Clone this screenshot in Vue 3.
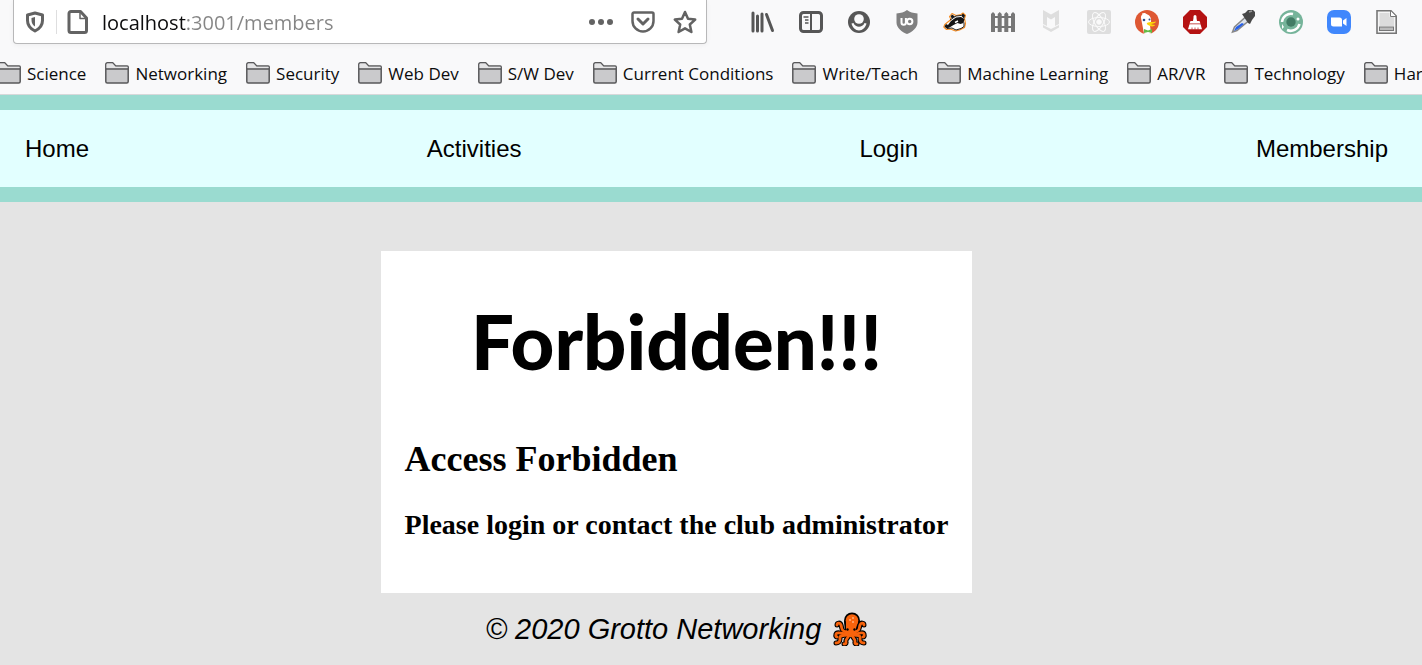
<script setup>
import { ref } from 'vue'

const address = ref('localhost:3001/members')
const bookmarks = [
  'Science', 'Networking', 'Security', 'Web Dev', 'S/W Dev', 'Current Conditions',
  'Write/Teach', 'Machine Learning', 'AR/VR', 'Technology', 'Hard',
]
const links = ['Home', 'Activities', 'Login', 'Membership']
const arms = [
  'M13 20C8 19 9 16 8 13 7 10 4 11 4 13',
  'M22 20c5-1 4-4 5-7 1-3 4-2 4 0',
  'M14 22c-6 0-10-3-11 0-.5 2 0 3 1 3',
  'M21 22c6 0 9-3 10 0 .5 2 0 3-1 3',
  'M15 23c-6 0-9 1-8 4 0 3-2 4-4 4',
  'M20 23c6 0 8 1 7 4 0 3 2 4 4 4',
  'M16 23c-1 4-4 4-3 7 .5 2-1 2-2 2',
  'M19 23c1 4 4 4 3 7-.5 2 1 2 2 2',
]
</script>

<template>
  <div class="window">
    <header class="chrome">
      <div class="toolbar">
        <div class="urlbar">
          <button class="tool shield" aria-label="Tracking protection">
            <svg viewBox="0 0 24 24" fill="none" stroke="#636363">
              <path d="M12 3 4.500 5v5.500C4.500 15.500 8 19 12 21c4-2 7.500-5.500 7.500-10.500V5Z" stroke-width="3" stroke-linejoin="round" />
              <path d="M12 7v9.500C9.500 15 8.500 13 8.500 10V8Z" fill="#636363" stroke="none" />
            </svg>
          </button>
          <button class="tool" aria-label="Site information">
            <svg viewBox="0 0 24 24" fill="none" stroke="#636363" stroke-width="3" stroke-linejoin="round">
              <path d="M5 1.500h9.500l6 6.500v12.500a2 2 0 0 1-2 2H5a2 2 0 0 1-2-2V3.500a2 2 0 0 1 2-2Z" />
              <path d="M14 2v6.500h6" stroke-width="1.500" />
            </svg>
          </button>
          <input v-model="address" class="address" type="text" aria-label="Address" spellcheck="false" />
          <div class="actions">
            <button class="tool" aria-label="Page actions">
              <svg viewBox="0 0 24 24" fill="#636363"><circle cx="3" cy="12" r="3" /><circle cx="12" cy="12" r="3" /><circle cx="21" cy="12" r="3" /></svg>
            </button>
            <button class="tool" aria-label="Save to Pocket">
              <svg viewBox="0 0 24 24" fill="none" stroke="#636363" stroke-width="2.500" stroke-linecap="round" stroke-linejoin="round">
                <path d="M3 2.500h18a1.500 1.500 0 0 1 1.500 1.500v7A10.500 10.500 0 0 1 1.500 11V4A1.500 1.500 0 0 1 3 2.500Z" />
                <path d="m7 9 5 5 5-5" stroke-width="3" />
              </svg>
            </button>
            <button class="tool" aria-label="Bookmark this page">
              <svg viewBox="0 0 24 24" fill="none" stroke="#636363" stroke-width="2.500" stroke-linejoin="round">
                <path d="m12 2 3 6.800 7.200.8-5.400 4.900 1.600 7.500L12 18.300 5.600 22l1.600-7.500-5.400-4.900L9 8.800Z" />
              </svg>
            </button>
          </div>
        </div>

        <div class="extensions">
          <button class="tool" aria-label="Library">
            <svg viewBox="0 0 24 24" fill="none" stroke="#565656" stroke-width="3" stroke-linecap="round">
              <path d="M2 3v18M6.500 6v15M11 4v17" /><path d="m15.500 4.500 6 16" />
            </svg>
          </button>
          <button class="tool" aria-label="Sidebars">
            <svg viewBox="0 0 24 24" fill="none" stroke="#565656">
              <rect x="1.500" y="2.500" width="21" height="19" rx="3" stroke-width="3" />
              <path d="M12 2v20" stroke-width="2" /><path d="M4.500 7h5M6 10h3.500M6 13h3.500" stroke-width="1.500" />
            </svg>
          </button>
          <button class="tool" aria-label="Account">
            <svg viewBox="0 0 24 24">
              <circle cx="12" cy="12" r="11" fill="#565656" />
              <path d="M4.500 13.500c1 4 4 7 7.500 7s6.500-3 7.500-7l-2-.5c-2 5-9 5-11 0Z" fill="#f9f9fa" />
              <circle cx="12" cy="9" r="4.800" fill="#f9f9fa" />
            </svg>
          </button>
          <button class="tool" aria-label="uBlock Origin">
            <svg viewBox="0 0 24 24">
              <path d="M12 0c3 2.500 6 3 10.500 3.500v9C22.500 18 17 22 12 24 7 22 1.500 18 1.500 12.500v-9C6 3 9 2.500 12 0Z" fill="#808080" />
              <path d="M6.500 8v4.500a2.200 2.200 0 0 0 4.400 0V8" fill="none" stroke="#fff" stroke-width="2" />
              <circle cx="14.700" cy="11.500" r="2.700" fill="none" stroke="#fff" stroke-width="2" />
            </svg>
          </button>
          <button class="tool" aria-label="Privacy Badger">
            <svg viewBox="0 0 24 24">
              <path d="m.8 17 1-2.500L8 9.500 6.500 6.500 9 3.500l4 2 5-1L20 3l2.500 2.500-1 3 1 5-1 4-5 2.500-4 1-5-2-4 .5Z" fill="#fff" stroke="#f58a1f" stroke-width="1.100" stroke-linejoin="round" />
              <path d="m1.500 16.500 1.500-2.500 2 1 3-4 5-3.500 5-.5 3.500 2-1 4-3 1-3-1-4 2-4 2.500-3 1Z" fill="#151515" />
              <path d="m7.500 6.500 1.500-2L12 6.500 9 8.500ZM18 5.500l2-2 2 2-1 3Z" fill="#151515" />
              <path d="m12 12.500 3-1.500" stroke="#fff" stroke-width="1.500" />
              <path d="m4 18.500 5-.5 4 2 5-1.500 3-2v-4M7 10l6-4 5-.5" fill="none" stroke="#222" stroke-width="1" />
            </svg>
          </button>
          <button class="tool" aria-label="Picket fence">
            <svg viewBox="0 0 24 24" fill="#777">
              <path d="M0 22V4l2-2 2 2v18ZM6.700 22V4l2-2 2 2v18ZM13.300 22V4l2-2 2 2v18ZM20 22V4l2-2 2 2v18ZM0 6h24v2H0ZM0 16h24v2H0Z" />
            </svg>
          </button>
          <button class="tool" aria-label="McAfee">
            <svg viewBox="0 0 24 24" fill="#dedede">
              <path d="m4 0 8 4.500L20 0v14l-4 2V7l-4 2.500L8 7v9l-4-2ZM4 15l8 4 8-4v2.500L12 22l-8-4.500Z" />
            </svg>
          </button>
          <button class="tool" aria-label="React Developer Tools">
            <svg viewBox="0 0 24 24" fill="none" stroke="#fafafa">
              <rect width="24" height="24" rx="2" fill="#dedede" stroke="none" />
              <circle cx="12" cy="12" r="2.300" fill="#fafafa" />
              <ellipse cx="12" cy="12" rx="10.500" ry="4.500" /><ellipse cx="12" cy="12" rx="10.500" ry="4.500" transform="rotate(60 12 12)" /><ellipse cx="12" cy="12" rx="10.500" ry="4.500" transform="rotate(120 12 12)" />
            </svg>
          </button>
          <button class="tool" aria-label="DuckDuckGo">
            <svg viewBox="0 0 24 24">
              <circle cx="12" cy="12" r="12" fill="#de5833" />
              <path d="M9 23.500 6 8c-.5-3 2-4.500 4-4 4 0 6.500 3 6 7.500l-1 4 1 8q-4 1-7 0Z" fill="#fff" />
              <path d="M7 3.500c2-1 4-.5 5 1L8 6Z" fill="#fff" />
              <path d="M12 13c3-2 6-.5 9-1.500-.5 2-3 2-5 2.500 1.500 1 3 .5 4 1-1 2-4 1.500-6 .5s-2.500-1.500-2-2.500Z" fill="#fdd20a" />
              <path d="m9 19 4 1.500L17 19v4l-4-1-4 1Z" fill="#65bc46" />
              <circle cx="9" cy="10" r="1.300" fill="#2d4f8e" /><circle cx="14.500" cy="9.500" r="1" fill="#2d4f8e" />
            </svg>
          </button>
          <button class="tool" aria-label="Cleaner">
            <svg viewBox="0 0 24 24">
              <path d="M7 0h10l7 7v10l-7 7H7l-7-7V7Z" fill="#b51212" />
              <path d="M10.500 8V6.500a1.500 1.500 0 0 1 3 0V8l.5 3h2.500l1 2.500h-11l1-2.500H10ZM6.500 14.200h11l1.500 5H5Z" fill="#fff" />
              <path d="M9 19.500v-2M12 19.500v-2M15 19.500v-2" stroke="#b51212" stroke-width=".7" />
            </svg>
          </button>
          <button class="tool" aria-label="Color picker">
            <svg viewBox="0 0 24 24">
              <path d="M1.500 22 3.500 17 14 7.500l3.500 3.500L6 20.500Z" fill="#dce3ed" stroke="#888" stroke-width="1.500" />
              <path d="m3 21 2-4 6-4 2 1-6 5Z" fill="#2860e6" />
              <path d="m11 4 3-1 3-3h5l2 2v4l-3 4-2 4-2-1Z" fill="#484848" /><path d="m18 2 3-1" stroke="#999" stroke-width="1.500" />
            </svg>
          </button>
          <button class="tool" aria-label="Tab reloader">
            <svg viewBox="0 0 24 24" fill="none">
              <circle cx="12" cy="12" r="12" fill="#76b49a" />
              <path d="M3 12a9 9 0 0 1 11-8M20.500 14A9 9 0 0 1 8 20" stroke="#fff" stroke-width="2.500" />
              <circle cx="12" cy="12" r="4.700" fill="#427c65" /><circle cx="19" cy="9" r="1.500" fill="#fff" />
              <path d="m3 14 2 3-2 2Z" fill="#fff" />
            </svg>
          </button>
          <button class="tool" aria-label="Zoom">
            <svg viewBox="0 0 24 24">
              <rect width="24" height="24" rx="7" fill="#4087fc" />
              <path d="M4 7.500h8.500a2.500 2.500 0 0 1 2.500 2.500v6.500H6.500A2.500 2.500 0 0 1 4 14ZM16 10.500l3.500-2.500v8L16 13.500Z" fill="#fff" />
            </svg>
          </button>
          <button class="tool" aria-label="Reader">
            <svg viewBox="0 0 24 24" stroke="#777">
              <path d="M2 .8h14l5.200 5.200v17.200H2Z" fill="#f5f5f5" stroke-width="1.600" />
              <path d="M4.500 3h10v4h4.500v9H4.500Z" fill="#dcdcdc" stroke="none" />
              <path d="M15.500 1v5.500H21" fill="#fff" /><rect x="4.500" y="17" width="14" height="3.500" fill="#bbb" />
            </svg>
          </button>
        </div>
      </div>

      <div class="bookmarks">
        <button v-for="name in bookmarks" :key="name" class="bookmark">
          <svg class="folder" viewBox="0 0 24 22" stroke="#58585a" stroke-width="1.500" stroke-linejoin="round">
            <path d="M.8 19.500V2.500q0-1.700 1.700-1.700h5.200l3 3.200h11.500q1 0 1 1v14.500q0 1.500-1.500 1.500H2.300Q.8 21 .8 19.500Z" fill="#cacacc" />
            <path d="M1.500 6.200V2.500q0-1 1-1h5l3 3.200h12v1.500Z" fill="#e4e4e5" stroke="none" />
            <path d="M1 7h22" />
          </svg>
          <span class="name">{{ name }}</span>
        </button>
      </div>
    </header>

    <nav class="site-nav">
      <a v-for="link in links" :key="link" href="#">{{ link }}</a>
    </nav>

    <div class="content">
      <main class="card">
        <h1>Forbidden!!!</h1>
        <h2>Access Forbidden</h2>
        <h3>Please login or contact the club administrator</h3>
      </main>
      <footer>
        <span>© 2020 Grotto Networking</span>
        <svg class="octopus" viewBox="0 0 34 34" role="img" aria-label="Octopus">
          <g fill="none" stroke-linecap="round" stroke-linejoin="round">
            <path v-for="arm in arms" :key="arm" :d="arm" stroke="#000" stroke-width="5" />
          </g>
          <circle cx="19" cy="8.500" r="8" />
          <path d="M11 9h16l-3 12H12Z" />
          <g fill="none" stroke="#f7630c" stroke-width="2.800" stroke-linecap="round" stroke-linejoin="round">
            <path v-for="arm in arms" :key="arm" :d="arm" />
          </g>
          <g fill="#f7630c">
            <circle cx="19" cy="8.500" r="6.300" />
            <path d="M13 10h12l-2 6v7H13v-7Z" />
            <ellipse cx="17.500" cy="21" rx="6" ry="4" />
          </g>
          <circle cx="14.500" cy="17.500" r="1.200" /><circle cx="21.500" cy="17.500" r="1.200" />
          <g fill="#ffad7a"><circle cx="20" cy="6" r="1" /><circle cx="17" cy="8" r="1" /><circle cx="20" cy="10" r="1" /></g>
        </svg>
      </footer>
    </div>
  </div>
</template>

<style>
html,
body {
  background: #e4e4e4;
}
</style>

<style scoped>
.window {
  overflow: hidden;
}

button {
  padding: 0;
  border: 0;
  background: none;
  color: inherit;
  font: inherit;
}

.chrome {
  background: #f9f9fa;
  border-bottom: 1px solid #d8d8da;
  color: #0c0c0d;
  font-family: "Open Sans", "Noto Sans", sans-serif;
}

.toolbar {
  display: flex;
  align-items: flex-start;
  gap: 44px;
  padding: 0 23px 0 13px;
}

.urlbar {
  display: flex;
  flex: 1;
  align-items: center;
  box-sizing: border-box;
  height: 44px;
  min-width: 0;
  padding: 0 9px;
  background: #fff;
  border: 1px solid #b8b8b9;
  border-top: 0;
  border-radius: 0 0 4px 4px;
  box-shadow: 0 1px 5px #0000000d;
}

.tool {
  flex: none;
  width: 24px;
  height: 24px;
}

.tool svg {
  display: block;
  width: 100%;
  height: 100%;
}

.shield {
  box-sizing: content-box;
  margin-right: 9px;
  padding-right: 9px;
  border-right: 1px solid #dededf;
}

.address {
  flex: 1;
  min-width: 0;
  margin-left: 12px;
  padding: 2px 0 0;
  border: 0;
  outline: 0;
  background: linear-gradient(90deg, #0c0c0d 84px, #858585 84px);
  background-clip: text;
  color: transparent;
  font: 20px/32px "Open Sans", "Noto Sans", sans-serif;
}

.actions {
  display: flex;
  gap: 18px;
}

.extensions {
  display: flex;
  gap: 24px;
  padding-top: 10px;
}

.bookmarks {
  display: flex;
  gap: 19px;
  height: 50px;
  margin-left: -3px;
}

.bookmark {
  display: flex;
  flex: none;
  align-items: center;
  gap: 6px;
  height: 58px;
  font-size: 17px;
  line-height: 24px;
  white-space: nowrap;
}

.name {
  padding-top: 2px;
}

.folder {
  width: 24px;
  height: 22px;
}

.site-nav {
  display: flex;
  justify-content: space-between;
  padding: 25px 34px 24px 25px;
  background: #e2ffff;
  border: solid #9adbd0;
  border-width: 15px 0;
  font: 24px/28px "Liberation Sans", Arial, sans-serif;
}

.site-nav a {
  color: #000;
  text-decoration: none;
}

.content {
  display: flex;
  flex-direction: column;
  align-items: center;
  padding: 49px 69px 16px 0;
}

.card {
  padding: 44px 24px 52px;
  background: #fff;
  color: #000;
  font-family: "Liberation Serif", "Times New Roman", serif;
}

h1 {
  margin: 0 0 52px;
  font: 900 76px/92px Lato, sans-serif;
  text-align: center;
}

h2 {
  margin: 0 0 30px;
  font-size: 36px;
  line-height: 40px;
}

h3 {
  margin: 0;
  font-size: 28px;
  line-height: 32px;
}

footer {
  display: flex;
  align-items: center;
  gap: 12px;
  padding-top: 19px;
  font: italic 29px/34px "Liberation Sans", Arial, sans-serif;
}

.octopus {
  width: 34px;
  height: 34px;
}
</style>
